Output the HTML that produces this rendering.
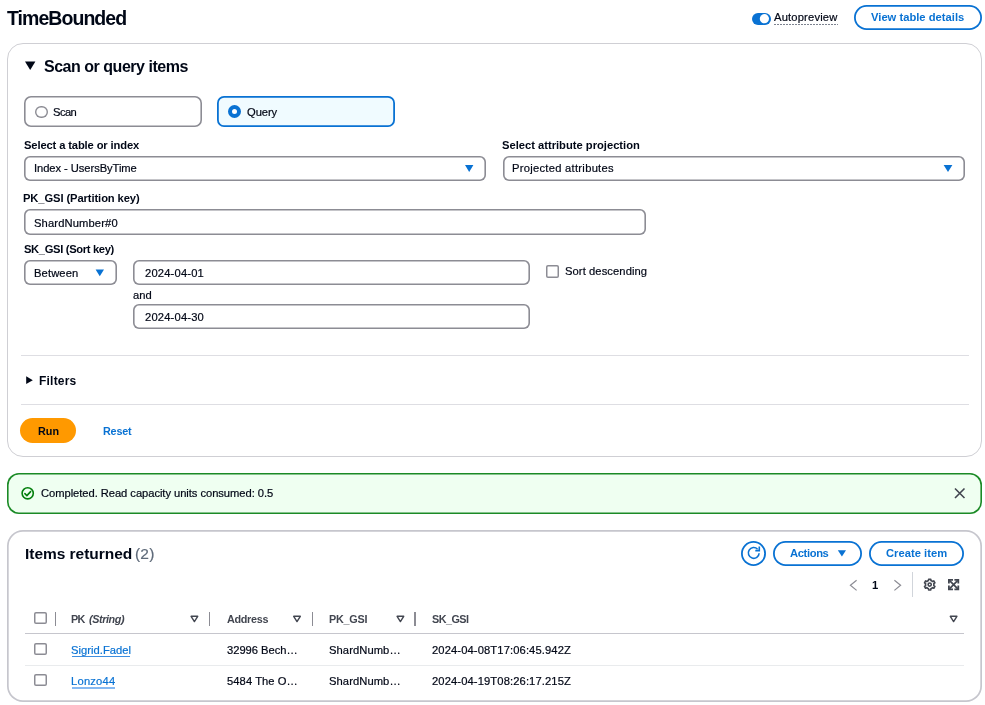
<!DOCTYPE html>
<html><head><meta charset="utf-8"><style>
html,body{margin:0;padding:0;background:#fff;width:985px;height:705px;overflow:hidden;position:relative;font-family:"Liberation Sans", sans-serif;-webkit-font-smoothing:antialiased;}
</style></head><body>
<div style="position:absolute;left:751.5px;top:12.5px;width:19.0px;height:12.5px;box-sizing:border-box;background:#0972d3;border-radius:7px"></div>
<svg style="position:absolute;left:0;top:0" width="985" height="705"><circle cx="764.4" cy="18.7" r="4.6" fill="#fff"/></svg>
<div style="position:absolute;left:774px;top:24px;width:64px;height:1px;box-sizing:border-box;background:repeating-linear-gradient(90deg,#7d8390 0 2px,transparent 2px 3px)"></div>
<div style="position:absolute;left:853.6px;top:5px;width:128.0px;height:24.6px;box-sizing:border-box;box-shadow:inset 0 0 0 1.8px #0972d3;border-radius:14px"></div>
<div style="position:absolute;left:7px;top:42.5px;width:975px;height:414.3px;box-sizing:border-box;border:1px solid #cfcfd4;border-radius:16px"></div>
<svg style="position:absolute;left:0;top:0" width="985" height="705"><path d="M25 61.6 L35.4 61.6 L30.2 70 Z" fill="#000716"/><path d="M26.2 376.2 L32.8 380.15 L26.2 384.1 Z" fill="#000716"/></svg>
<div style="position:absolute;left:24px;top:96px;width:177.5px;height:30.799999999999997px;box-sizing:border-box;box-shadow:inset 0 0 0 1.6px #8c8c94;border-radius:7px"></div>
<div style="position:absolute;left:35px;top:105.6px;width:12.5px;height:12.400000000000006px;box-sizing:border-box;box-shadow:inset 0 0 0 1.4px #8c8c94;border-radius:50%"></div>
<div style="position:absolute;left:217.2px;top:96px;width:178.2px;height:30.799999999999997px;box-sizing:border-box;box-shadow:inset 0 0 0 1.8px #0972d3;border-radius:7px;background:#f0fbff"></div>
<div style="position:absolute;left:228.2px;top:105.2px;width:13.0px;height:13.0px;box-sizing:border-box;border:4px solid #0972d3;border-radius:50%;background:#fff"></div>
<div style="position:absolute;left:24px;top:155.6px;width:462.4px;height:25.200000000000017px;box-sizing:border-box;box-shadow:inset 0 0 0 1.6px #8c8c94;border-radius:6px"></div>
<div style="position:absolute;left:502.6px;top:155.6px;width:462.19999999999993px;height:25.200000000000017px;box-sizing:border-box;box-shadow:inset 0 0 0 1.6px #8c8c94;border-radius:6px"></div>
<svg style="position:absolute;left:0;top:0" width="985" height="705"><path d="M465 165 L473.4 165 L469.2 172 Z" fill="#0972d3"/><path d="M943.6 165 L952.4 165 L948 172 Z" fill="#0972d3"/><path d="M95.6 269.4 L104 269.4 L99.8 276.2 Z" fill="#0972d3"/></svg>
<div style="position:absolute;left:24px;top:209.2px;width:622px;height:25.600000000000023px;box-sizing:border-box;box-shadow:inset 0 0 0 1.6px #8c8c94;border-radius:6px"></div>
<div style="position:absolute;left:24px;top:260.2px;width:93px;height:24.600000000000023px;box-sizing:border-box;box-shadow:inset 0 0 0 1.6px #8c8c94;border-radius:6px"></div>
<div style="position:absolute;left:133px;top:260.2px;width:397.4px;height:24.600000000000023px;box-sizing:border-box;box-shadow:inset 0 0 0 1.6px #8c8c94;border-radius:6px"></div>
<div style="position:absolute;left:546px;top:265px;width:13px;height:12.5px;box-sizing:border-box;box-shadow:inset 0 0 0 1.5px #8c8c94;border-radius:2px"></div>
<div style="position:absolute;left:133px;top:304.4px;width:397.4px;height:25.0px;box-sizing:border-box;box-shadow:inset 0 0 0 1.6px #8c8c94;border-radius:6px"></div>
<div style="position:absolute;left:20.6px;top:354.6px;width:948.0px;height:1.1999999999999886px;box-sizing:border-box;background:#dedee3"></div>
<div style="position:absolute;left:20.6px;top:404.2px;width:948.0px;height:1.1999999999999886px;box-sizing:border-box;background:#dedee3"></div>
<div style="position:absolute;left:20.4px;top:418px;width:55.300000000000004px;height:25.100000000000023px;box-sizing:border-box;background:#ff9900;border-radius:13px"></div>
<div style="position:absolute;left:7px;top:472.6px;width:975px;height:41.0px;box-sizing:border-box;box-shadow:inset 0 0 0 1.6px #1b8a26;border-radius:12px;background:#effff1"></div>
<svg style="position:absolute;left:0;top:0" width="985" height="705"><circle cx="27.7" cy="493.3" r="5.6" fill="none" stroke="#037f0c" stroke-width="1.6"/><path d="M24.9 493.6 L26.9 495.6 L30.6 491.6" fill="none" stroke="#037f0c" stroke-width="1.6" stroke-linecap="round" stroke-linejoin="round"/><path d="M955 488.5 L964.5 498 M964.5 488.5 L955 498" stroke="#424650" stroke-width="1.6"/></svg>
<div style="position:absolute;left:7px;top:529.6px;width:975px;height:172.79999999999995px;box-sizing:border-box;box-shadow:inset 0 0 0 1.7px #c6c6cd;border-radius:16px"></div>
<div style="position:absolute;left:741.4px;top:540.6px;width:25.0px;height:25.0px;box-sizing:border-box;box-shadow:inset 0 0 0 1.8px #0972d3;border-radius:50%"></div>
<svg style="position:absolute;left:0;top:0" width="985" height="705"><path d="M759.1 553.2 A5.4 5.4 0 1 1 757.6 549.2" fill="none" stroke="#0972d3" stroke-width="1.6"/><path d="M755.3 550.6 L759.3 550.6 L759.3 546.6" fill="none" stroke="#0972d3" stroke-width="1.6" stroke-linejoin="miter"/><path d="M837.8 550.2 L846 550.2 L841.9 556.5 Z" fill="#0972d3"/></svg>
<div style="position:absolute;left:773px;top:541px;width:88.79999999999995px;height:24.600000000000023px;box-sizing:border-box;box-shadow:inset 0 0 0 1.8px #0972d3;border-radius:13px"></div>
<div style="position:absolute;left:869px;top:541px;width:95px;height:24.600000000000023px;box-sizing:border-box;box-shadow:inset 0 0 0 1.8px #0972d3;border-radius:13px"></div>
<svg style="position:absolute;left:0;top:0" width="985" height="705"><path d="M856.6 580.2 L850.4 585.3 L856.6 590.4" fill="none" stroke="#8c8c94" stroke-width="1.2"/><path d="M894.4 580.2 L900.6 585.3 L894.4 590.4" fill="none" stroke="#8c8c94" stroke-width="1.2"/></svg>
<div style="position:absolute;left:912px;top:572.4px;width:1px;height:24.600000000000023px;box-sizing:border-box;background:#d1d5db"></div>
<div style="position:absolute;left:34.4px;top:612.4px;width:12.600000000000001px;height:12.0px;box-sizing:border-box;box-shadow:inset 0 0 0 1.5px #8c8c94;border-radius:2px"></div>
<div style="position:absolute;left:34.4px;top:643.4px;width:12.600000000000001px;height:12.0px;box-sizing:border-box;box-shadow:inset 0 0 0 1.5px #8c8c94;border-radius:2px"></div>
<div style="position:absolute;left:34.4px;top:674.4px;width:12.600000000000001px;height:12.0px;box-sizing:border-box;box-shadow:inset 0 0 0 1.5px #8c8c94;border-radius:2px"></div>
<div style="position:absolute;left:54.699999999999996px;top:612px;width:1.4000000000000057px;height:13.600000000000023px;box-sizing:border-box;background:#8c8c94"></div>
<div style="position:absolute;left:208.70000000000002px;top:612px;width:1.3999999999999773px;height:13.600000000000023px;box-sizing:border-box;background:#8c8c94"></div>
<div style="position:absolute;left:311.7px;top:612px;width:1.3999999999999773px;height:13.600000000000023px;box-sizing:border-box;background:#8c8c94"></div>
<div style="position:absolute;left:414.3px;top:612px;width:1.3999999999999773px;height:13.600000000000023px;box-sizing:border-box;background:#8c8c94"></div>
<svg style="position:absolute;left:0;top:0" width="985" height="705"><path d="M191.1 616.3 L197.70000000000002 616.3 L194.4 621.6 Z" fill="none" stroke="#424650" stroke-width="1.4" stroke-linejoin="round"/><path d="M293.7 616.3 L300.3 616.3 L297 621.6 Z" fill="none" stroke="#424650" stroke-width="1.4" stroke-linejoin="round"/><path d="M397.09999999999997 616.3 L403.7 616.3 L400.4 621.6 Z" fill="none" stroke="#424650" stroke-width="1.4" stroke-linejoin="round"/><path d="M950.3000000000001 616.3 L956.9 616.3 L953.6 621.6 Z" fill="none" stroke="#424650" stroke-width="1.4" stroke-linejoin="round"/></svg>
<div style="position:absolute;left:25px;top:633px;width:939px;height:1.2000000000000455px;box-sizing:border-box;background:#c6c6cd"></div>
<div style="position:absolute;left:25px;top:665px;width:939px;height:1px;box-sizing:border-box;background:#e9ebed"></div>
<div style="position:absolute;left:72px;top:655.6px;width:58.400000000000006px;height:1.1999999999999318px;box-sizing:border-box;background:#3d8ee0"></div>
<div style="position:absolute;left:72px;top:687.4px;width:43px;height:1.3999999999999773px;box-sizing:border-box;background:#85b9f2"></div>
<svg style="position:absolute;left:0;top:0" width="985" height="705"><g transform="translate(929.7 584.6)" fill="none" stroke="#424650" stroke-width="1.6" stroke-linejoin="round"><path d="M2.10 -3.64 L1.19 -4.03 L1.10 -5.39 L-1.10 -5.39 L-1.19 -4.03 L-2.10 -3.64 L-2.89 -3.05 L-4.12 -3.65 L-5.22 -1.74 L-4.08 -0.98 L-4.20 0.00 L-4.08 0.98 L-5.22 1.74 L-4.12 3.65 L-2.89 3.05 L-2.10 3.64 L-1.19 4.03 L-1.10 5.39 L1.10 5.39 L1.19 4.03 L2.10 3.64 L2.89 3.05 L4.12 3.65 L5.22 1.74 L4.08 0.98 L4.20 0.00 L4.08 -0.98 L5.22 -1.74 L4.12 -3.65 L2.89 -3.05 Z"/><circle r="1.6"/></g><g fill="none" stroke="#424650" stroke-width="1.8"><path d="M948.9 583.6 V579.9 H953 M954.4 579.9 H958.3 V583.6 M958.3 585.6 V589.3 H954.4 M953 589.3 H948.9 V585.6"/><path d="M949.4 580.4 L957.8 588.8 M957.8 580.4 L949.4 588.8" stroke-width="1.7"/></g></svg>
<div id="t0" style="position:absolute;left:7.40px;top:18.00px;line-height:0;font-size:19.5px;font-weight:700;font-style:normal;color:#000716;letter-spacing:-0.953px;white-space:nowrap;will-change:transform;">TimeBounded</div>
<div id="t1" style="position:absolute;left:774.00px;top:17.00px;line-height:0;font-size:11.2px;font-weight:400;font-style:normal;color:#000716;letter-spacing:0.172px;white-space:nowrap;will-change:transform;-webkit-text-stroke:0.2px #000716;">Autopreview</div>
<div id="t2" style="position:absolute;left:871.00px;top:17.00px;line-height:0;font-size:11.2px;font-weight:700;font-style:normal;color:#0972d3;letter-spacing:0.009px;white-space:nowrap;will-change:transform;">View table details</div>
<div id="t3" style="position:absolute;left:43.60px;top:67.00px;line-height:0;font-size:16px;font-weight:700;font-style:normal;color:#000716;letter-spacing:-0.480px;white-space:nowrap;will-change:transform;">Scan or query items</div>
<div id="t4" style="position:absolute;left:53.40px;top:112.00px;line-height:0;font-size:11.2px;font-weight:400;font-style:normal;color:#000716;letter-spacing:-0.559px;white-space:nowrap;will-change:transform;-webkit-text-stroke:0.2px #000716;">Scan</div>
<div id="t5" style="position:absolute;left:247.40px;top:112.00px;line-height:0;font-size:11.2px;font-weight:400;font-style:normal;color:#000716;letter-spacing:-0.068px;white-space:nowrap;will-change:transform;-webkit-text-stroke:0.2px #000716;">Query</div>
<div id="t6" style="position:absolute;left:24.00px;top:145.00px;line-height:0;font-size:11.2px;font-weight:700;font-style:normal;color:#000716;letter-spacing:-0.132px;white-space:nowrap;will-change:transform;">Select a table or index</div>
<div id="t7" style="position:absolute;left:34.00px;top:168.00px;line-height:0;font-size:11.2px;font-weight:400;font-style:normal;color:#000716;letter-spacing:-0.067px;white-space:nowrap;will-change:transform;-webkit-text-stroke:0.2px #000716;">Index - UsersByTime</div>
<div id="t8" style="position:absolute;left:502.40px;top:145.00px;line-height:0;font-size:11.2px;font-weight:700;font-style:normal;color:#000716;letter-spacing:-0.007px;white-space:nowrap;will-change:transform;">Select attribute projection</div>
<div id="t9" style="position:absolute;left:512.40px;top:168.00px;line-height:0;font-size:11.2px;font-weight:400;font-style:normal;color:#000716;letter-spacing:0.274px;white-space:nowrap;will-change:transform;-webkit-text-stroke:0.2px #000716;">Projected attributes</div>
<div id="t10" style="position:absolute;left:23.00px;top:198.00px;line-height:0;font-size:11.2px;font-weight:700;font-style:normal;color:#000716;letter-spacing:-0.096px;white-space:nowrap;will-change:transform;">PK_GSI (Partition key)</div>
<div id="t11" style="position:absolute;left:34.00px;top:223.00px;line-height:0;font-size:11.2px;font-weight:400;font-style:normal;color:#000716;letter-spacing:0.128px;white-space:nowrap;will-change:transform;-webkit-text-stroke:0.2px #000716;">ShardNumber#0</div>
<div id="t12" style="position:absolute;left:24.00px;top:249.00px;line-height:0;font-size:11.2px;font-weight:700;font-style:normal;color:#000716;letter-spacing:-0.339px;white-space:nowrap;will-change:transform;">SK_GSI (Sort key)</div>
<div id="t13" style="position:absolute;left:34.00px;top:273.00px;line-height:0;font-size:11.2px;font-weight:400;font-style:normal;color:#000716;letter-spacing:0.114px;white-space:nowrap;will-change:transform;-webkit-text-stroke:0.2px #000716;">Between</div>
<div id="t14" style="position:absolute;left:144.60px;top:273.00px;line-height:0;font-size:11.2px;font-weight:400;font-style:normal;color:#000716;letter-spacing:0.177px;white-space:nowrap;will-change:transform;-webkit-text-stroke:0.2px #000716;">2024-04-01</div>
<div id="t15" style="position:absolute;left:564.60px;top:271.00px;line-height:0;font-size:11.2px;font-weight:400;font-style:normal;color:#000716;letter-spacing:0.084px;white-space:nowrap;will-change:transform;-webkit-text-stroke:0.2px #000716;">Sort descending</div>
<div id="t16" style="position:absolute;left:133.00px;top:295.00px;line-height:0;font-size:11.2px;font-weight:400;font-style:normal;color:#000716;letter-spacing:0.078px;white-space:nowrap;will-change:transform;-webkit-text-stroke:0.2px #000716;">and</div>
<div id="t17" style="position:absolute;left:144.60px;top:317.00px;line-height:0;font-size:11.2px;font-weight:400;font-style:normal;color:#000716;letter-spacing:0.177px;white-space:nowrap;will-change:transform;-webkit-text-stroke:0.2px #000716;">2024-04-30</div>
<div id="t18" style="position:absolute;left:39.40px;top:381.00px;line-height:0;font-size:12px;font-weight:700;font-style:normal;color:#000716;letter-spacing:0.210px;white-space:nowrap;will-change:transform;">Filters</div>
<div id="t19" style="position:absolute;left:38.20px;top:431.00px;line-height:0;font-size:10.8px;font-weight:700;font-style:normal;color:#000716;letter-spacing:0.004px;white-space:nowrap;will-change:transform;">Run</div>
<div id="t20" style="position:absolute;left:102.60px;top:431.00px;line-height:0;font-size:10.8px;font-weight:700;font-style:normal;color:#0972d3;letter-spacing:-0.203px;white-space:nowrap;will-change:transform;">Reset</div>
<div id="t21" style="position:absolute;left:41.00px;top:493.00px;line-height:0;font-size:11.2px;font-weight:400;font-style:normal;color:#000716;letter-spacing:-0.052px;white-space:nowrap;will-change:transform;-webkit-text-stroke:0.2px #000716;">Completed. Read capacity units consumed: 0.5</div>
<div id="t22" style="position:absolute;left:24.80px;top:554.00px;line-height:0;font-size:15.5px;font-weight:700;font-style:normal;color:#000716;letter-spacing:-0.031px;white-space:nowrap;will-change:transform;">Items returned</div>
<div id="t23" style="position:absolute;left:135.20px;top:554.00px;line-height:0;font-size:15.5px;font-weight:400;font-style:normal;color:#5f6b7a;letter-spacing:0.209px;white-space:nowrap;will-change:transform;-webkit-text-stroke:0.2px #5f6b7a;">(2)</div>
<div id="t24" style="position:absolute;left:790.40px;top:553.00px;line-height:0;font-size:11.2px;font-weight:700;font-style:normal;color:#0972d3;letter-spacing:-0.367px;white-space:nowrap;will-change:transform;">Actions</div>
<div id="t25" style="position:absolute;left:886.20px;top:553.00px;line-height:0;font-size:11.2px;font-weight:700;font-style:normal;color:#0972d3;letter-spacing:0.021px;white-space:nowrap;will-change:transform;">Create item</div>
<div id="t26" style="position:absolute;left:872.00px;top:585.00px;line-height:0;font-size:11.2px;font-weight:700;font-style:normal;color:#000716;letter-spacing:0.000px;white-space:nowrap;will-change:transform;">1</div>
<div id="t27" style="position:absolute;left:71.00px;top:619.00px;line-height:0;font-size:10.8px;font-weight:700;font-style:normal;color:#424650;letter-spacing:-0.801px;white-space:nowrap;will-change:transform;">PK</div>
<div id="t28" style="position:absolute;left:89.00px;top:619.00px;line-height:0;font-size:10.8px;font-weight:700;font-style:italic;color:#424650;letter-spacing:-0.398px;white-space:nowrap;will-change:transform;">(String)</div>
<div id="t29" style="position:absolute;left:226.60px;top:619.00px;line-height:0;font-size:10.8px;font-weight:700;font-style:normal;color:#424650;letter-spacing:-0.300px;white-space:nowrap;will-change:transform;">Address</div>
<div id="t30" style="position:absolute;left:328.60px;top:619.00px;line-height:0;font-size:10.8px;font-weight:700;font-style:normal;color:#424650;letter-spacing:-0.241px;white-space:nowrap;will-change:transform;">PK_GSI</div>
<div id="t31" style="position:absolute;left:432.00px;top:619.00px;line-height:0;font-size:10.8px;font-weight:700;font-style:normal;color:#424650;letter-spacing:-0.521px;white-space:nowrap;will-change:transform;">SK_GSI</div>
<div id="t32" style="position:absolute;left:71.00px;top:650.00px;line-height:0;font-size:11.2px;font-weight:400;font-style:normal;color:#0972d3;letter-spacing:0.035px;white-space:nowrap;will-change:transform;-webkit-text-stroke:0.2px #0972d3;">Sigrid.Fadel</div>
<div id="t33" style="position:absolute;left:226.60px;top:650.00px;line-height:0;font-size:11.2px;font-weight:400;font-style:normal;color:#000716;letter-spacing:-0.032px;white-space:nowrap;will-change:transform;-webkit-text-stroke:0.2px #000716;">32996 Bech…</div>
<div id="t34" style="position:absolute;left:328.60px;top:650.00px;line-height:0;font-size:11.2px;font-weight:400;font-style:normal;color:#000716;letter-spacing:0.078px;white-space:nowrap;will-change:transform;-webkit-text-stroke:0.2px #000716;">ShardNumb…</div>
<div id="t35" style="position:absolute;left:432.00px;top:650.00px;line-height:0;font-size:11.2px;font-weight:400;font-style:normal;color:#000716;letter-spacing:0.114px;white-space:nowrap;will-change:transform;-webkit-text-stroke:0.2px #000716;">2024-04-08T17:06:45.942Z</div>
<div id="t36" style="position:absolute;left:71.00px;top:681.00px;line-height:0;font-size:11.2px;font-weight:400;font-style:normal;color:#0972d3;letter-spacing:0.216px;white-space:nowrap;will-change:transform;-webkit-text-stroke:0.2px #0972d3;">Lonzo44</div>
<div id="t37" style="position:absolute;left:226.60px;top:681.00px;line-height:0;font-size:11.2px;font-weight:400;font-style:normal;color:#000716;letter-spacing:0.072px;white-space:nowrap;will-change:transform;-webkit-text-stroke:0.2px #000716;">5484 The O…</div>
<div id="t38" style="position:absolute;left:328.60px;top:681.00px;line-height:0;font-size:11.2px;font-weight:400;font-style:normal;color:#000716;letter-spacing:0.078px;white-space:nowrap;will-change:transform;-webkit-text-stroke:0.2px #000716;">ShardNumb…</div>
<div id="t39" style="position:absolute;left:432.00px;top:681.00px;line-height:0;font-size:11.2px;font-weight:400;font-style:normal;color:#000716;letter-spacing:0.114px;white-space:nowrap;will-change:transform;-webkit-text-stroke:0.2px #000716;">2024-04-19T08:26:17.215Z</div>
</body></html>
